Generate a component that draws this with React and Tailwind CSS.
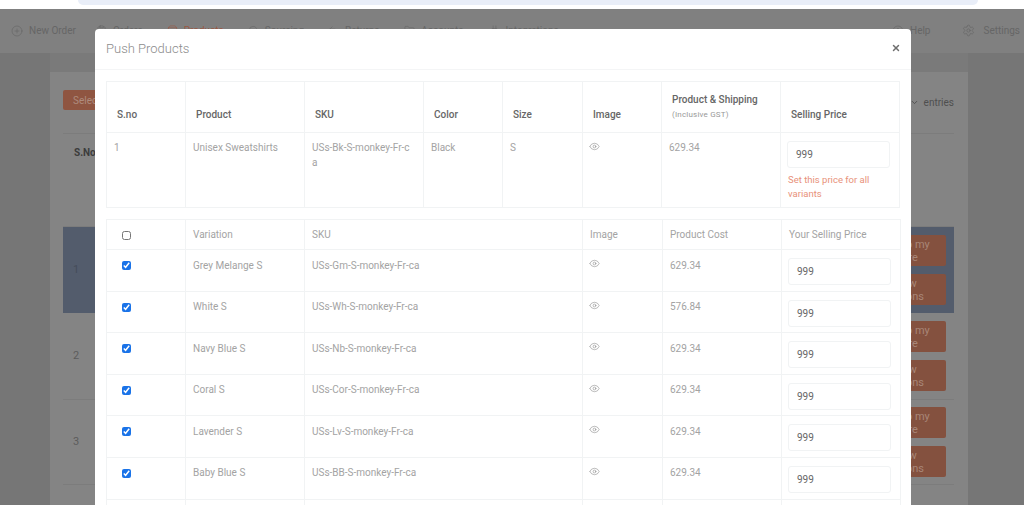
import { CirclePlus, ClipboardList, ShoppingBag, Search, Undo2, Folder, Plug, CircleHelp, Settings, ChevronDown, Eye, X } from "lucide-react";

const navItems = [
  { label: "Orders", icon: ClipboardList, cls: "ml-[20px]" },
  { label: "Products", icon: ShoppingBag, cls: "ml-[24px] text-[#9a5843]" },
  { label: "Sourcing", icon: Search, cls: "ml-[24px]" },
  { label: "Returns", icon: Undo2, cls: "ml-[24px]" },
  { label: "Accounts", icon: Folder, cls: "ml-[25px]" },
  { label: "Integrations", icon: Plug, cls: "ml-[25px]" },
];

const variations = [
  { name: "Grey Melange S", sku: "USs-Gm-S-monkey-Fr-ca", cost: "629.34" },
  { name: "White S", sku: "USs-Wh-S-monkey-Fr-ca", cost: "576.84" },
  { name: "Navy Blue S", sku: "USs-Nb-S-monkey-Fr-ca", cost: "629.34" },
  { name: "Coral S", sku: "USs-Cor-S-monkey-Fr-ca", cost: "629.34" },
  { name: "Lavender S", sku: "USs-Lv-S-monkey-Fr-ca", cost: "629.34" },
  { name: "Baby Blue S", sku: "USs-BB-S-monkey-Fr-ca", cost: "629.34" },
];

function BgRow({ n, active, h }) {
  return (
    <div className={`flex items-center justify-between pl-[10px] pr-[8px] ${h} ${active ? "bg-[#535c6c]" : "border-b border-[#7c7c7c]"}`}>
      <span className={`text-[11px] ${active ? "text-[#454c5a]" : "text-[#5c5c5c]"}`}>{n}</span>
      <div className="flex w-[86px] flex-col gap-[8px]">
        <div className="flex h-[31px] items-center justify-center rounded-[2px] bg-[#84513f] pl-[4px] text-center text-[11px] leading-[13px] text-[#a88678]">Add to my<br />Store</div>
        <div className="flex h-[31px] items-center justify-center rounded-[2px] bg-[#84513f] pl-[4px] text-center text-[11px] leading-[13px] text-[#a88678]">View<br />Options</div>
      </div>
    </div>
  );
}

function Th({ children, className = "" }) {
  return <th className={`border border-[#f1f3f4] px-[10px] pb-[10px] text-left align-bottom text-[10px] font-medium text-[#666] ${className}`}>{children}</th>;
}

function Td({ children, className = "" }) {
  return <td className={`border border-[#f1f3f4] px-[7px] align-top text-[10px] text-[#a3a3a3] ${className}`}>{children}</td>;
}

function PriceBox() {
  return (
    <div className="flex h-[27px] w-[103px] items-center rounded-[3px] border border-[#f1f3f4] pl-[8px] text-[10px] text-[#666]">999</div>
  );
}

export default function App() {
  return (
    <div className="relative h-[505px] w-[1024px] overflow-hidden bg-[#808080] font-['Roboto',sans-serif]">
      {/* browser strip */}
      <div className="h-[9px] bg-white">
        <div className="ml-[78px] h-[5px] w-[900px] rounded-b-[8px] bg-[#e9eef8]"></div>
      </div>

      {/* page behind the modal */}
      <div className="flex h-[44px] items-center pb-[1px] pl-[11px] text-[10px] text-[#666]">
        <CirclePlus size={12} strokeWidth={1.3} />
        <span className="ml-[6px]">New Order</span>
        {navItems.map((item) => (
          <div key={item.label} className={`flex items-center gap-[6px] ${item.cls}`}>
            <item.icon size={11} strokeWidth={1.3} />
            <span>{item.label}</span>
          </div>
        ))}
        <div className="ml-auto flex items-center gap-[6px]">
          <CircleHelp size={12} strokeWidth={1.3} />
          <span>Help</span>
        </div>
        <div className="ml-[32px] mr-[4px] flex items-center gap-[8px]">
          <Settings size={13} strokeWidth={1.3} />
          <span>Settings</span>
        </div>
      </div>
      <div className="flex h-[452px] bg-[#767676]">
        <div className="ml-[50px] w-[918px]">
          <div className="h-[19px] bg-[#7a7a7a]"></div>
          <div className="h-[433px] bg-[#848484] pl-[13px] pr-[14px] pt-[18px]">
            <div className="flex h-[20px] items-center justify-between">
              <div className="flex h-[20px] w-[60px] items-center rounded-[2px] bg-[#8f5541] pl-[10px] text-[10px] text-[#ae8b7d]">Select</div>
              <div className="mt-[4px] flex items-center gap-[5px] text-[10px] text-[#4f4f4f]">
                <ChevronDown size={9} strokeWidth={2.5} />
                <span>entries</span>
              </div>
            </div>
            <div className="mt-[23px] h-[94px] border-y border-[#7c7c7c] pl-[11px] pt-[11px] text-[10px] font-bold text-[#3c3c3c]">S.No</div>
            <BgRow n="1" active h="h-[86px]" />
            <BgRow n="2" h="h-[87px]" />
            <BgRow n="3" h="h-[85px]" />
          </div>
        </div>
      </div>

      {/* modal */}
      <div className="absolute left-[95px] top-[29px] h-[476px] w-[816px] overflow-hidden rounded-t-[4px] bg-white">
        <div className="flex h-[41px] items-center justify-between border-b border-[#f4f5f6] pl-[11px] pr-[10px]">
          <span className="text-[13px] font-light text-[#8c8c8c]">Push Products</span>
          <X size={10} strokeWidth={3.5} className="mb-[3px] text-[#6e6e6e]" />
        </div>

        <div className="px-[11px] pt-[11px]">
          <table className="w-[794px] table-fixed border-collapse">
            <colgroup>
              <col className="w-[79px]" />
              <col className="w-[119px]" />
              <col className="w-[119px]" />
              <col className="w-[79px]" />
              <col className="w-[80px]" />
              <col className="w-[79px]" />
              <col className="w-[119px]" />
              <col className="w-[119px]" />
            </colgroup>
            <thead>
              <tr className="h-[51px]">
                <Th>S.no</Th>
                <Th>Product</Th>
                <Th>SKU</Th>
                <Th>Color</Th>
                <Th>Size</Th>
                <Th>Image</Th>
                <Th className="leading-[15px]">
                  Product &amp; Shipping
                  <div className="text-[8px] font-normal tracking-[0.2px] text-[#999]">(Inclusive GST)</div>
                </Th>
                <Th>Selling Price</Th>
              </tr>
            </thead>
            <tbody>
              <tr className="h-[75px]">
                <Td className="pt-[7px] leading-[15px]">1</Td>
                <Td className="pt-[7px] leading-[15px]">Unisex Sweatshirts</Td>
                <Td className="!pr-[10px] pt-[7px] leading-[15px] break-all">USs-Bk-S-monkey-Fr-ca</Td>
                <Td className="pt-[7px] leading-[15px]">Black</Td>
                <Td className="pt-[7px] leading-[15px]">S</Td>
                <Td className="!pl-[6px] pt-[8px]"><Eye size={11} strokeWidth={1.2} className="text-[#858585]" /></Td>
                <Td className="pt-[7px] leading-[15px]">629.34</Td>
                <Td className="!pl-[6px] pt-[8px]">
                  <PriceBox />
                  <p className="mt-[5px] pl-[1px] text-[9.5px] leading-[14px] text-[#e8917a]">Set this price for all variants</p>
                </Td>
              </tr>
            </tbody>
          </table>

          <table className="mt-[11px] w-[794px] table-fixed border-collapse">
            <colgroup>
              <col className="w-[79px]" />
              <col className="w-[119px]" />
              <col className="w-[278px]" />
              <col className="w-[80px]" />
              <col className="w-[119px]" />
              <col className="w-[119px]" />
            </colgroup>
            <thead>
              <tr className="h-[30px]">
                <Td className="!pl-[15px] !align-middle"><input type="checkbox" readOnly className="h-[9px] w-[9px] align-middle" /></Td>
                <Td className="!align-middle">Variation</Td>
                <Td className="!align-middle">SKU</Td>
                <Td className="!align-middle">Image</Td>
                <Td className="!align-middle">Product Cost</Td>
                <Td className="!align-middle">Your Selling Price</Td>
              </tr>
            </thead>
            <tbody>
              {variations.map((v) => (
                <tr key={v.name} className="h-[41.6px]">
                  <Td className="!pl-[15px] pt-[9px]"><input type="checkbox" checked readOnly className="h-[9px] w-[9px] accent-[#1a73e8]" /></Td>
                  <Td className="pt-[7.5px] leading-[15px]">{v.name}</Td>
                  <Td className="pt-[7.5px] leading-[15px]">{v.sku}</Td>
                  <Td className="!pl-[6px] pt-[8px]"><Eye size={11} strokeWidth={1.2} className="text-[#858585]" /></Td>
                  <Td className="pt-[7.5px] leading-[15px]">{v.cost}</Td>
                  <Td className="!pl-[6px] pt-[8px]"><PriceBox /></Td>
                </tr>
              ))}
              <tr className="h-[41.6px]">
                <Td></Td>
                <Td></Td>
                <Td></Td>
                <Td></Td>
                <Td></Td>
                <Td></Td>
              </tr>
            </tbody>
          </table>
        </div>
      </div>
    </div>
  );
}
